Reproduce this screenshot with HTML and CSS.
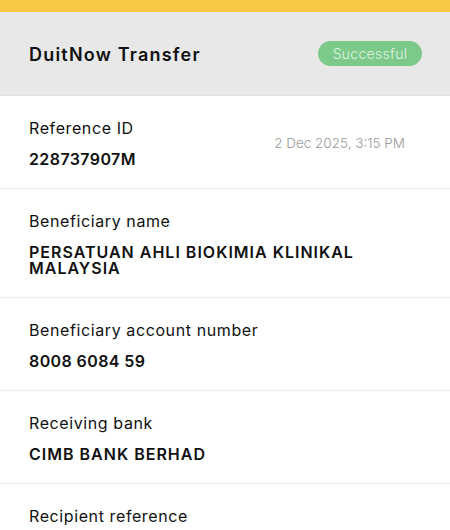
FILE: index.html
```html
<!DOCTYPE html>
<html lang="en">
<head>
<meta charset="UTF-8">
<meta name="viewport" content="width=device-width, initial-scale=1.0">
<title>DuitNow Transfer</title>
<link rel="stylesheet" href="styles.css">
</head>
<body>
  <div class="top-bar"></div>

  <div class="header">
    <div class="title">DuitNow Transfer</div>
    <div class="badge">Successful</div>
  </div>

  <div class="row row-split">
    <div>
      <div class="label">Reference ID</div>
      <div class="value value-num">228737907M</div>
    </div>
    <div class="date">2 Dec 2025, 3:15 PM</div>
  </div>

  <div class="row">
    <div class="label">Beneficiary name</div>
    <div class="value">PERSATUAN AHLI BIOKIMIA KLINIKAL MALAYSIA</div>
  </div>

  <div class="row">
    <div class="label">Beneficiary account number</div>
    <div class="value value-num">8008 6084 59</div>
  </div>

  <div class="row">
    <div class="label">Receiving bank</div>
    <div class="value">CIMB BANK BERHAD</div>
  </div>

  <div class="row">
    <div class="label">Recipient reference</div>
  </div>
</body>
</html>
```

FILE: styles.css
```css
body {
  font-family: Inter, "Noto Sans", sans-serif;
  margin: 0;
  padding: 0;
  background: #fff;
  color: #111;
}

.top-bar {
  height: 12px;
  background: #f7c843;
}

.header {
  display: flex;
  align-items: center;
  justify-content: space-between;
  height: 83px;
  padding: 0 28px 0 29px;
  background: #e8e8e8;
  border-bottom: 1px solid #e2e2e2;
}

.title {
  font-size: 18px;
  font-weight: 600;
  letter-spacing: 1.2px;
  padding-top: 2px;
}

.badge {
  width: 104px;
  height: 25px;
  line-height: 25px;
  text-align: center;
  border-radius: 13px;
  background: #7cc98a;
  color: #dff3e3;
  font-size: 14px;
  font-weight: 300;
  letter-spacing: 0.3px;
}

.row {
  padding: 22px 29px 21px;
  border-bottom: 1px solid #ededed;
}

.row-split {
  display: flex;
  align-items: center;
  justify-content: space-between;
  padding-right: 45px;
}

.label {
  font-size: 16px;
  line-height: 20px;
  letter-spacing: 0.6px;
}

.value {
  margin-top: 13px;
  font-size: 16px;
  line-height: 16px;
  font-weight: 600;
  letter-spacing: 1px;
  padding-right: 60px;
}

.value-num {
  padding-right: 0;
  letter-spacing: 0.4px;
}

.date {
  font-size: 13.5px;
  font-weight: 300;
  color: #999;
}
```
